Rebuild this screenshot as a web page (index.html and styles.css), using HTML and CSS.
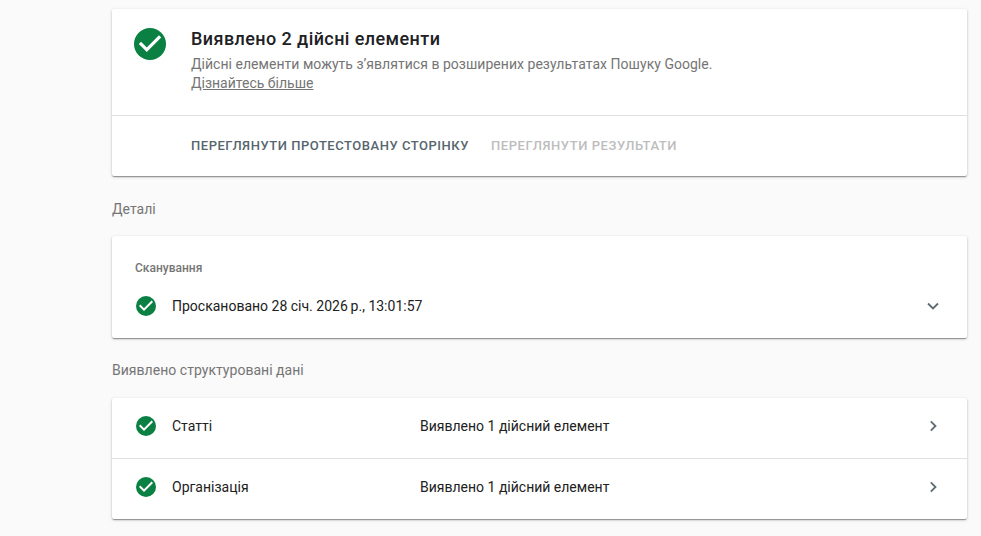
FILE: index.html
```html
<!DOCTYPE html>
<html lang="uk">
<head>
<meta charset="utf-8">
<title>Результати</title>
<link rel="stylesheet" href="styles.css">
</head>
<body>
<main class="page">
  <section class="card summary">
    <div class="summary-top">
      <svg class="check check-lg" viewBox="2 2 20 20"><circle cx="12" cy="12" r="10" fill="#0b8043"/><path d="M10 17l-5-5 1.410-1.410L10 14.170l7.590-7.590L19 8z" fill="#fff"/></svg>
      <div class="summary-text">
        <h1 class="title">Виявлено 2 дійсні елементи</h1>
        <p class="desc">Дійсні елементи можуть з’являтися в розширених результатах Пошуку Google.<br><a class="link" href="#">Дізнайтесь більше</a></p>
      </div>
    </div>
    <div class="actions">
      <span class="action">ПЕРЕГЛЯНУТИ ПРОТЕСТОВАНУ СТОРІНКУ</span>
      <span class="action action-off">ПЕРЕГЛЯНУТИ РЕЗУЛЬТАТИ</span>
    </div>
  </section>

  <h2 class="section-title">Деталі</h2>
  <section class="card crawl">
    <div class="crawl-label">Сканування</div>
    <div class="crawl-row">
      <svg class="check" viewBox="2 2 20 20"><circle cx="12" cy="12" r="10" fill="#0b8043"/><path d="M10 17l-5-5 1.410-1.410L10 14.170l7.590-7.590L19 8z" fill="#fff"/></svg>
      <span class="row-name">Проскановано 28 січ. 2026&thinsp;р., 13:01:57</span>
      <svg class="chev" viewBox="0 0 16 16"><path d="M3 5.500l5 5 5-5" fill="none" stroke="#5f6b73" stroke-width="1.800"/></svg>
    </div>
  </section>

  <h2 class="section-title section-title-tight">Виявлено структуровані дані</h2>
  <section class="card list">
    <div class="list-row">
      <svg class="check" viewBox="2 2 20 20"><circle cx="12" cy="12" r="10" fill="#0b8043"/><path d="M10 17l-5-5 1.410-1.410L10 14.170l7.590-7.590L19 8z" fill="#fff"/></svg>
      <span class="row-name row-fixed">Статті</span>
      <span class="row-name row-grow">Виявлено 1 дійсний елемент</span>
      <svg class="chev" viewBox="0 0 16 16"><path d="M5.800 3.300l4.700 4.700-4.700 4.700" fill="none" stroke="#5f6b73" stroke-width="1.800"/></svg>
    </div>
    <div class="list-row">
      <svg class="check" viewBox="2 2 20 20"><circle cx="12" cy="12" r="10" fill="#0b8043"/><path d="M10 17l-5-5 1.410-1.410L10 14.170l7.590-7.590L19 8z" fill="#fff"/></svg>
      <span class="row-name row-fixed">Організація</span>
      <span class="row-name row-grow">Виявлено 1 дійсний елемент</span>
      <svg class="chev" viewBox="0 0 16 16"><path d="M5.800 3.300l4.700 4.700-4.700 4.700" fill="none" stroke="#5f6b73" stroke-width="1.800"/></svg>
    </div>
  </section>
</main>
</body>
</html>
```
FILE: styles.css
```css
html, body {
  margin: 0;
  height: 100%;
  overflow: hidden;
  background: #fafafa;
}
body {
  font-family: Roboto, "Liberation Sans", sans-serif;
  color: #202124;
}
.page {
  width: 855px;
  margin-left: 112px;
  padding-top: 9px;
}
.card {
  background: #fff;
  border-radius: 2px;
  box-shadow: 0 1px 1px 0 rgba(0,0,0,.14), 0 1px 3px 0 rgba(0,0,0,.24), 0 2px 1px -1px rgba(0,0,0,.2);
}
.summary-top {
  display: flex;
  height: 107px;
  box-sizing: border-box;
  padding: 19px 0 0 22px;
  border-bottom: 1px solid #e0e0e0;
}
.check {
  width: 20px;
  height: 20px;
  flex: none;
}
.check-lg {
  width: 32px;
  height: 32px;
}
.summary-text {
  margin-left: 25px;
}
.title {
  margin: 0;
  font-size: 18px;
  font-weight: 500;
  letter-spacing: .42px;
  line-height: 22px;
  color: #202124;
}
.desc {
  margin: 5px 0 0;
  font-size: 14px;
  letter-spacing: .03px;
  line-height: 19px;
  color: #757575;
}
.link {
  color: #757575;
  letter-spacing: 0;
  text-decoration: underline;
}
.actions {
  display: flex;
  gap: 22px;
  height: 60px;
  box-sizing: border-box;
  padding: 0 0 2px 79px;
  align-items: center;
}
.action {
  font-size: 13px;
  font-weight: 500;
  letter-spacing: .53px;
  color: #56656e;
}
.action-off {
  letter-spacing: .58px;
  color: #bdbdbd;
}
.section-title {
  margin: 0;
  padding: 24px 0 17px;
  font-size: 14px;
  font-weight: 400;
  letter-spacing: .03px;
  line-height: 19px;
  color: #757575;
}
.section-title-tight {
  padding: 23px 0 18px;
}
.crawl {
  height: 102px;
  box-sizing: border-box;
  padding-top: 24px;
}
.crawl-label {
  padding-left: 23px;
  font-size: 12px;
  font-weight: 500;
  line-height: 16px;
  color: #757575;
}
.crawl-row {
  display: flex;
  align-items: center;
  margin-top: 18px;
  height: 24px;
  padding: 0 26px 0 24px;
}
.row-name {
  font-size: 14px;
  line-height: 20px;
  color: #212121;
}
.crawl-row .row-name {
  margin-left: 16px;
  flex: 1;
}
.chev {
  width: 16px;
  height: 16px;
  flex: none;
}
.list-row {
  display: flex;
  align-items: center;
  height: 60px;
  padding: 0 26px 5px 24px;
  box-sizing: border-box;
}
.list-row + .list-row {
  height: 61px;
  border-top: 1px solid #e0e0e0;
}
.row-fixed {
  width: 248px;
  margin-left: 16px;
  flex: none;
}
.row-grow {
  flex: 1;
}
```
